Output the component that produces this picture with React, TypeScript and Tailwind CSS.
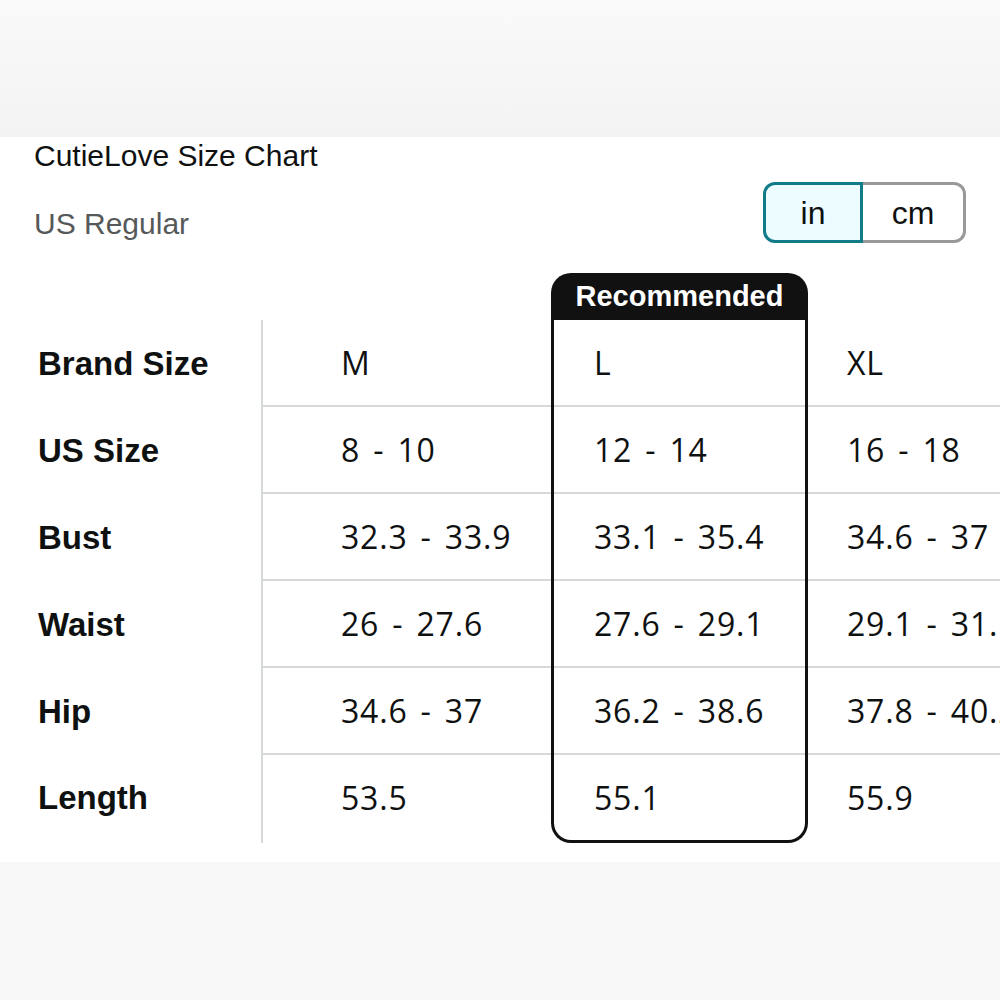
import React from "react";

const rows = [
  { label: "Brand Size", m: "M", l: "L", xl: "XL" },
  { label: "US Size", m: "8 - 10", l: "12 - 14", xl: "16 - 18" },
  { label: "Bust", m: "32.3 - 33.9", l: "33.1 - 35.4", xl: "34.6 - 37" },
  { label: "Waist", m: "26 - 27.6", l: "27.6 - 29.1", xl: "29.1 - 31.1" },
  { label: "Hip", m: "34.6 - 37", l: "36.2 - 38.6", xl: "37.8 - 40.2" },
  { label: "Length", m: "53.5", l: "55.1", xl: "55.9" },
];

const cellH = (i: number) => (i === rows.length - 1 ? "h-[85px]" : "h-[87px]");

const ValueColumn = ({ field, className, pad }: { field: "m" | "l" | "xl"; className: string; pad: string }) => (
  <div className={`flex flex-col ${className}`}>
    {rows.map((r, i) => (
      <div
        key={r.label}
        className={`${cellH(i)} flex items-center ${pad} whitespace-nowrap font-['Open_Sans',sans-serif] text-[32px] tracking-[0.8px] [word-spacing:4px] text-[#0f1111] ${
          i < rows.length - 1 ? "border-b-2 border-[#d5d9d9]" : ""
        }`}
      >
        {r[field]}
      </div>
    ))}
  </div>
);

export default function App() {
  return (
    <div className="w-[1000px] h-[1000px] overflow-hidden bg-[#f7f7f7] flex flex-col" style={{ fontFamily: '"Liberation Sans", Arial, sans-serif' }}>
      <div className="h-[137px] shrink-0 bg-gradient-to-b from-[#fafafa] to-[#f3f3f3]" />

      <div className="h-[725px] shrink-0 bg-white pt-[2px] overflow-hidden">
        <div className="flex justify-between items-start pl-[34px] pr-[34px]">
          <div>
            <div className="text-[30px] leading-[34px] text-[#0f1111]">CutieLove Size Chart</div>
            <div className="mt-[34px] text-[30px] leading-[34px] text-[#565959]">US Regular</div>
          </div>
          <div className="mt-[43px] flex">
            <div className="w-[100px] h-[61px] flex items-center justify-center rounded-l-[12px] border-[3px] border-[#127b8a] bg-[#edfdff] text-[32px] text-[#0f1111]">
              in
            </div>
            <div className="w-[103px] h-[61px] flex items-center justify-center rounded-r-[12px] border-[3px] border-l-0 border-[#999999] bg-white text-[32px] text-[#0f1111]">
              cm
            </div>
          </div>
        </div>

        <div className="mt-[30px] flex">
          <div className="w-[551px] shrink-0" />
          <div className="w-[257px] h-[47px] rounded-t-[20px] bg-[#111111] flex items-center justify-center text-white font-bold text-[29px]">
            Recommended
          </div>
        </div>

        <div className="flex">
          <div className="w-[263px] shrink-0 border-r-2 border-[#d5d9d9] flex flex-col">
            {rows.map((r, i) => (
              <div key={r.label} className={`${cellH(i)} flex items-center pl-[38px] font-bold text-[33px] text-[#0f1111]`}>
                {r.label}
              </div>
            ))}
          </div>
          <ValueColumn field="m" className="w-[288px] shrink-0" pad="pl-[78px]" />
          <ValueColumn
            field="l"
            className="w-[257px] shrink-0 self-start border-x-[3px] border-b-[3px] border-[#111111] rounded-b-[20px] overflow-hidden"
            pad="pl-[40px]"
          />
          <ValueColumn field="xl" className="flex-1 min-w-0" pad="pl-[39px]" />
        </div>
      </div>

      <div className="flex-1 bg-[#f8f8f8]" />
    </div>
  );
}
